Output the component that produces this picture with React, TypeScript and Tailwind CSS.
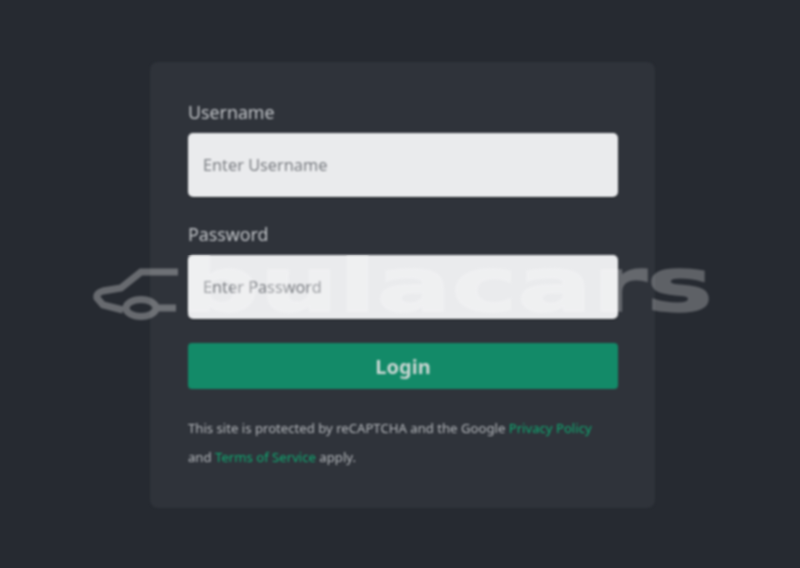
export default function App() {
  const font = "[font-family:'Noto_Sans','Open_Sans',sans-serif]";
  return (
    <div className={`relative h-[568px] w-[800px] overflow-hidden bg-[#262a31] ${font}`}>
      <div className="flex h-full justify-center pl-[5px] pt-[62px] blur-[0.8px]">
        <form className="flex h-[446px] w-[505px] flex-col rounded-lg bg-[#2f333a] pl-[38px] pr-[37px] pt-[37px]">
          <label className="h-[34px] text-[17.8px] leading-[26px] text-[#c0c3c7]">Username</label>
          <div className="flex h-[64px] items-center rounded-[5px] bg-[#eaebed] pl-[15px] text-[16.3px] text-[#7b7e83] shadow-[0_1px_1px_#14181c]">Enter Username</div>
          <label className="mt-[24px] h-[34px] text-[17.8px] leading-[26px] text-[#c0c3c7]">Password</label>
          <div className="flex h-[64px] items-center rounded-[5px] bg-[#eaebed] pl-[15px] text-[16.3px] text-[#7b7e83] shadow-[0_1px_1px_#14181c]">Enter Password</div>
          <div className="mt-[24px] flex h-[46px] items-center justify-center rounded-[4px] bg-[#138a68] pt-[2px] text-[20px] font-bold text-[#c9d6d2]">Login</div>
          <p className="mt-[25px] text-[13.15px] leading-[29px] text-[#b4b7bb]">
            This site is protected by reCAPTCHA and the Google <span className="text-[#0fa870]">Privacy Policy</span>
            <br />
            and <span className="text-[#0fa870]">Terms of Service</span> apply.
          </p>
        </form>
      </div>
      <div className="pointer-events-none absolute left-[93px] top-[266px] flex items-start opacity-[0.3] blur-[0.8px]">
        <svg width="86" height="56" viewBox="93 266 86 56" fill="none" stroke="#fff" strokeWidth="7">
          <path d="M178 272H141L121 288L103 291Q96 293 97 298L103 305L123 310" />
          <ellipse cx="141" cy="308" rx="15" ry="8.5" />
          <path d="M157 308H176" />
        </svg>
      </div>
      <div className="pointer-events-none absolute left-[180px] top-[239px] origin-left scale-x-[1.48] whitespace-nowrap text-[75px] font-bold leading-[92px] text-white opacity-[0.26] blur-[0.8px] [clip-path:inset(16px_0_0_0)] [-webkit-text-stroke:1.5px_white] [font-family:'DejaVu_Sans',sans-serif]">
        bulacars
      </div>
    </div>
  );
}
